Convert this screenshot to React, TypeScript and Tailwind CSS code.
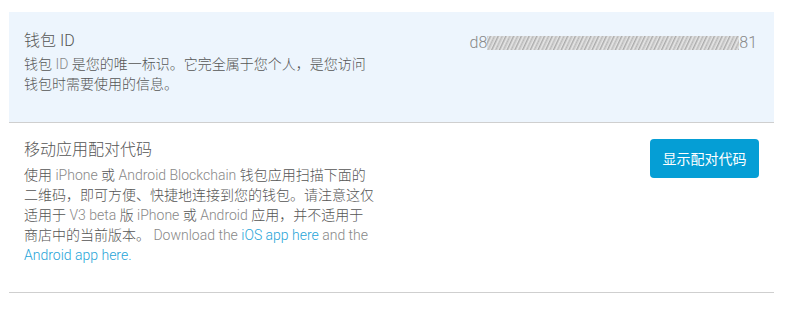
import React from 'react';

const font = { fontFamily: 'Roboto, "Noto Sans CJK SC", sans-serif' };

function BlurredId() {
    // the id is masked in the screenshot: keep the ends, noise in the middle
    return (
        <div className="flex items-center text-base text-[#888] font-light">
            <span>d8</span>
            <span className="inline-block h-[14px] w-[252px] bg-[repeating-linear-gradient(115deg,#c4c4c4_0px,#e4e4e4_2px,#aaaaaa_3px,#e8e8e8_5px,#b8b8b8_7px)]" />
            <span>81</span>
        </div>
    );
}

export default function App() {
    return (
        <div className="w-[787px] h-[314px] bg-white pt-[12px] pl-[9px]" style={font}>
            <div className="w-[765px]">
                <div className="flex justify-between bg-[#edf5fd] border-b border-[#cfcfcf] px-[15px] pt-[19px] h-[111px]">
                    <div className="w-[350px]">
                        <h3 className="text-base font-light text-[#555] leading-5">钱包 ID</h3>
                        <p className="mt-[3px] text-sm font-light text-[#555] leading-5">
                            钱包 <span className="text-[#888]">ID</span> 是您的唯一标识。它完全属于您个人，是您访问钱包时需要使用的信息。
                        </p>
                    </div>
                    <div className="pr-[2px]">
                        <BlurredId />
                    </div>
                </div>
                <div className="flex justify-between border-b border-[#cfcfcf] px-[15px] pt-[16px] h-[170px]">
                    <div className="w-[352px] pt-[1px]">
                        <h3 className="text-base font-light text-[#555] leading-5">移动应用配对代码</h3>
                        <p className="mt-[5px] text-sm font-light text-[#555] leading-5">
                            使用 <span className="text-[#888]">iPhone</span> 或 <span className="text-[#888]">Android Blockchain</span> 钱包应用扫描下面的二维码，即可方便、快捷地连接到您的钱包。请注意这仅适用于 <span className="text-[#888]">V3 beta</span> 版 <span className="text-[#888]">iPhone</span> 或 <span className="text-[#888]">Android</span> 应用，并不适用于商店中的当前版本。{' '}
                            <span className="text-[#888]">Download the </span>
                            <a className="text-[#1fa4d8]">iOS app here</a>
                            <span className="text-[#888]"> and the </span>
                            <a className="text-[#1fa4d8]">Android app here.</a>
                        </p>
                    </div>
                    <div>
                        <button className="w-[109px] h-[39px] rounded-[4px] bg-[#059ed5] text-white text-sm leading-none">
                            显示配对代码
                        </button>
                    </div>
                </div>
            </div>
        </div>
    );
}
